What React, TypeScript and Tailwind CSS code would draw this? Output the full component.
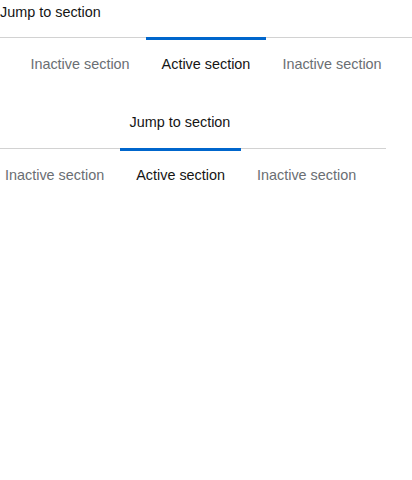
const sections = ['Inactive section', 'Active section', 'Inactive section'];

function Items() {
  return (
    <ul className="flex">
      {sections.map((s, i) => (
        <li
          key={i}
          className={`-mt-px border-t-[3px] px-4 pt-[14px] pb-4 text-[14.4px] leading-[21px] whitespace-nowrap ${
            i === 1 ? 'border-[#0066cc] text-[#151515]' : 'border-transparent text-[#6a6e73]'
          }`}
        >
          {s}
        </li>
      ))}
    </ul>
  );
}

export default function App() {
  return (
    <div className="bg-white text-[#151515]" style={{ fontFamily: '"Liberation Sans", Arial, sans-serif' }}>
      {/* horizontal jump links */}
      <div className="w-[412px]">
        <div className="h-6 text-[14.4px] leading-6">Jump to section</div>
        <div className="mt-[13px] flex justify-center border-t border-[#d2d2d2]">
          <Items />
        </div>
      </div>

      {/* centered jump links */}
      <div className="mt-[20px] w-[386px]">
        <div className="-ml-[11px] w-[382px] -translate-y-px text-center text-[14.4px] leading-6">Jump to section</div>
        <div className="mt-[13px] border-t border-[#d2d2d2]">
          <div className="-ml-[11px] w-[382px]">
            <Items />
          </div>
        </div>
      </div>
    </div>
  );
}
